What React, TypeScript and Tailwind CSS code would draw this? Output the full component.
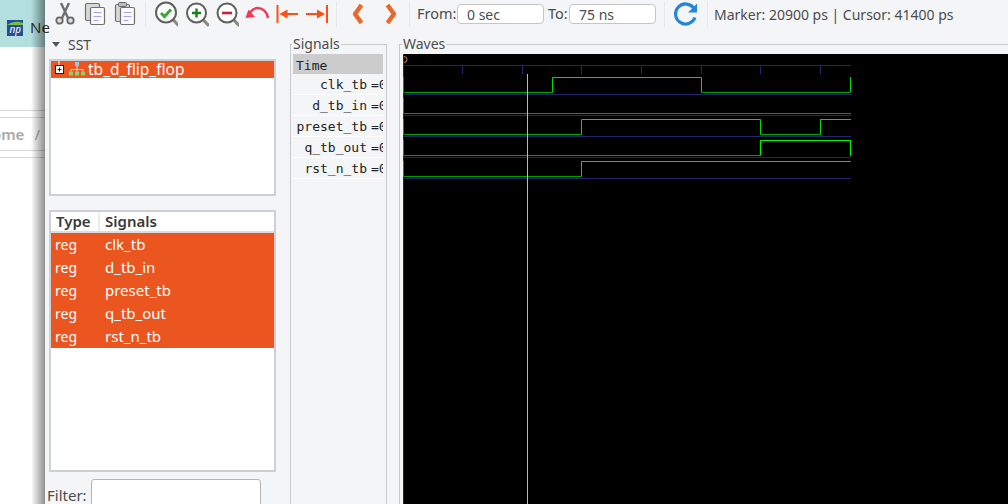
import type { ReactNode } from 'react';

const ui = 'font-["Noto_Sans",sans-serif]';
const mono = 'font-["DejaVu_Sans_Mono",monospace]';

// signal panel rows, the value column is cut off by the pane edge
const names = ['clk_tb', 'd_tb_in', 'preset_tb', 'q_tb_out', 'rst_n_tb'];

function Icon({ w, children }: { w: number; children: ReactNode }) {
  return (
    <svg width={w} height={28} viewBox={`0 0 ${w} 28`} className="block shrink-0">
      {children}
    </svg>
  );
}

function Doc({ x, y, front }: { x: number; y: number; front?: boolean }) {
  return (
    <g>
      <rect x={x} y={y} width="14" height="17" rx="1.5" fill={front ? '#fafafa' : '#d8d8d8'} stroke="#707070" strokeWidth="1.2" />
      {front && (
        <path d={`M${x + 3} ${y + 5}h8M${x + 3} ${y + 9}h8M${x + 3} ${y + 13}h5`} stroke="#a8a4ec" strokeWidth="1.2" />
      )}
    </g>
  );
}

function Lens({ cx, cy, r, children }: { cx: number; cy: number; r: number; children: ReactNode }) {
  const edge = r * 0.7;
  return (
    <g>
      <path d={`M${cx + edge} ${cy + edge}L${cx + r + 2} ${cy + r + 2.500}`} stroke="#8a8a80" strokeWidth="3" strokeLinecap="round" />
      <circle cx={cx} cy={cy} r={r} fill="#fff" stroke="#5f625c" strokeWidth="2" />
      {children}
    </g>
  );
}

function Toolbar() {
  return (
    <div className={`flex h-[28px] items-center pl-[9px] text-[14px] text-[#4c4c4c] ${ui}`}>
      <Icon w={22}>
        <path d="M7 3l7 15M15 3l-7 15" stroke="#6e6e6e" strokeWidth="2.400" />
        <circle cx="5.500" cy="20.500" r="3.200" fill="#ddd" stroke="#666" strokeWidth="1.800" />
        <circle cx="16.500" cy="20.500" r="3.200" fill="#ddd" stroke="#666" strokeWidth="1.800" />
      </Icon>
      <div className="w-[8px]" />
      <Icon w={22}>
        <Doc x={1.5} y={3.5} />
        <Doc x={6.5} y={7.5} front />
      </Icon>
      <div className="w-[8px]" />
      <Icon w={22}>
        <Doc x={1.5} y={4.5} />
        <rect x="4.500" y="2.500" width="8" height="4" rx="1" fill="#bbb" stroke="#666" />
        <Doc x={6.5} y={7.5} front />
      </Icon>
      <div className="ml-[9px] mr-[8px] h-[25px] w-px shrink-0 bg-[#e6e8ea]" />
      <Icon w={24}>
        <Lens cx={12} cy={12.5} r={10}>
          <path d="M7 13l3.500 3.500 6.500-7" fill="none" stroke="#3da23a" strokeWidth="3" />
        </Lens>
      </Icon>
      <div className="w-[7px]" />
      <Icon w={24}>
        <Lens cx={11.5} cy={13} r={9.5}>
          <path d="M11.500 8.500v9M7 13h9" stroke="#17801c" strokeWidth="2.400" />
        </Lens>
      </Icon>
      <div className="w-[6px]" />
      <Icon w={24}>
        <Lens cx={12} cy={13} r={9.5}>
          <path d="M7 13h10" stroke="#c8203a" strokeWidth="2.600" />
        </Lens>
      </Icon>
      <div className="w-[6px]" />
      <Icon w={24}>
        <path d="M23 18C22 11 17 8 12.500 8 9 8 7 10 5 12.500" fill="none" stroke="#f03a55" strokeWidth="2.400" />
        <path d="M0.500 18l9.500-1-6.500-7.500z" fill="#f03a55" />
      </Icon>
      <div className="w-[7px]" />
      <Icon w={24}>
        <path d="M1.500 5v18" stroke="#fb4f14" strokeWidth="2" />
        <path d="M6 14h16" stroke="#fb4f14" strokeWidth="2" />
        <path d="M3.500 14l8-4.500v9z" fill="#fb4f14" />
      </Icon>
      <div className="w-[4px]" />
      <Icon w={24}>
        <path d="M23 5v18" stroke="#fb4f14" strokeWidth="2" />
        <path d="M2 14h16" stroke="#fb4f14" strokeWidth="2" />
        <path d="M21 14l-8-4.500v9z" fill="#fb4f14" />
      </Icon>
      <div className="ml-[8px] mr-[12px] h-[25px] w-px shrink-0 bg-[#e6e8ea]" />
      <Icon w={16}>
        <path d="M12.500 5L6 14l6.500 9" fill="none" stroke="#e9692c" strokeWidth="4.500" strokeLinejoin="round" />
      </Icon>
      <div className="w-[17px]" />
      <Icon w={16}>
        <path d="M5.500 5L12 14l-6.500 9" fill="none" stroke="#e9692c" strokeWidth="4.500" strokeLinejoin="round" />
      </Icon>
      <div className="ml-[11px] mr-[7px] h-[25px] w-px shrink-0 bg-[#e6e8ea]" />
      <span className="w-[40px] text-[14.500px]">From:</span>
      <div className="flex h-[20px] w-[87px] items-center rounded-[4px] border border-[#c4c6c9] bg-white pl-[9px]">0 sec</div>
      <span className="ml-[4px] w-[21px] text-[14.500px]">To:</span>
      <div className="flex h-[20px] w-[87px] items-center rounded-[4px] border border-[#c4c6c9] bg-white pl-[9px]">75 ns</div>
      <div className="ml-[8px] mr-[8px] h-[25px] w-px shrink-0 bg-[#e6e8ea]" />
      <Icon w={25}>
        <path d="M21 8.500A10 10 0 1 0 22 17.500" fill="none" stroke="#2585d8" strokeWidth="3.200" />
        <path d="M24 3.500v9h-9z" fill="#2585d8" />
      </Icon>
      <div className="ml-[9px] mr-[6px] h-[25px] w-px shrink-0 bg-[#e6e8ea]" />
      <span className="whitespace-pre">Marker: 20900 ps | Cursor: 41400 ps</span>
    </div>
  );
}

function Wave({ d, bright }: { d: string; bright?: boolean }) {
  return <path d={d} fill="none" stroke={bright ? '#00e000' : '#00a000'} strokeWidth="1" />;
}

function WaveCanvas() {
  const ticks = [462, 522, 581, 641, 701, 760, 820];
  const rows = [94.5, 115.5, 136.5, 157.5, 178.5];
  return (
    <svg width={605} height={450} viewBox="403 54 605 450" className="block">
      <path d="M403.500 54v450" stroke="#22226e" />
      <path d="M403 65.500h448" stroke="#24246e" />
      {ticks.map((t) => (
        <path key={t} d={`M${t + 0.5} 65v9`} stroke="#24246e" />
      ))}
      {rows.map((y) => (
        <path key={y} d={`M403 ${y}h448`} stroke="#24246e" />
      ))}
      <Wave d="M403.500 77v15.500H552.500" />
      <Wave bright d="M552.500 92.500V77.500H701.500V92.500" />
      <Wave d="M701.500 92.500H850.500" />
      <Wave bright d="M850.500 92V77" />
      <Wave d="M403.500 98v15.500H851" />
      <Wave d="M403.500 119v15.500H581.500" />
      <Wave bright d="M581.500 134.500V119.500H760.500V134.500" />
      <Wave d="M760.500 134.500H820.500" />
      <Wave bright d="M820.500 134.500V119.500H851" />
      <Wave d="M403.500 140v15.500H760.500" />
      <path d="M760.500 155.500V140.500H850.500V156" fill="none" stroke="#00f000" strokeWidth="1.200" />
      <Wave d="M403.500 161v15.500H581.500" />
      <Wave bright d="M581.500 176.500V161.500H851" />
      <path d="M527.500 74V504" stroke="#eaa79c" />
      <path d="M404 56.500a3 3 0 0 1 0 6" fill="none" stroke="#d09040" />
    </svg>
  );
}

function OrangeRow({ type, name }: { type: string; name: string }) {
  return (
    <div className="flex h-[23px] items-center bg-[#eb5520] text-[14px] text-[#fff]">
      <span className="w-[54px] pl-[4px]">{type}</span>
      <span className="text-[15px]">{name}</span>
    </div>
  );
}

export default function App() {
  return (
    <div className={`flex h-[504px] w-[1008px] overflow-hidden bg-[#f4f5f7] ${ui}`}>
      {/* browser page behind the app window */}
      <div className="relative flex h-full w-[45px] shrink-0 flex-col bg-white">
        <div className="flex h-[47px] items-center bg-[#b4dfdf] pl-[7px] pt-[8px]">
          <svg width="16" height="16" viewBox="0 0 16 16" className="shrink-0">
            <rect width="16" height="16" fill="#1f4f96" />
            <path d="M0 5c6-4 11-4 16-2v2H0z" fill="#7fbf3f" />
            <text x="2.500" y="13" fontSize="10" fontStyle="italic" fill="#fff">np</text>
          </svg>
          <span className="ml-[7px] text-[15px] text-[#333]">Ne</span>
        </div>
        <div className="h-[64px] border-b border-[#d8d8d8]" />
        <div className="mt-[6px] flex h-[34px] items-center justify-end border-y border-[#d8d8d8] pr-[5px] text-[15px] font-semibold text-[#a8a8a8]">
          <span>ome</span>
          <span className="ml-[10px] font-normal">/</span>
        </div>
        <div className="h-[7px] border-b border-[#d8d8d8]" />
        <div className="absolute inset-y-0 right-0 w-[14px] bg-gradient-to-r from-transparent to-[#00000070]" />
      </div>

      {/* gtkwave window */}
      <div className="flex min-w-0 flex-1 flex-col">
        <Toolbar />
        <div className="mt-[16px] flex min-h-0 flex-1 pl-[4px]">
          {/* SST pane */}
          <div className="w-[227px] shrink-0 text-[14px] text-[#4c4c4c]">
            <div className="-mt-[10px] mb-[5px] flex h-[20px] items-center gap-[8px] pl-[3px]">
              <span className="h-0 w-0 border-x-[4px] border-t-[5px] border-x-transparent border-t-[#555]" />
              <span>SST</span>
            </div>
            <div className="h-[137px] border-2 border-[#ccd0d4] bg-white">
              <div className="flex h-[17px] items-center bg-[#eb5520] text-[15.500px] text-[#fff]">
                <svg width="37" height="17" viewBox="0 0 37 17" className="shrink-0">
                  <path d="M8 0v4" stroke="#fff" />
                  <rect x="4.500" y="4.500" width="8" height="8" fill="#fff" stroke="#222" />
                  <path d="M6.500 8.500h4M8.500 6.500v4" stroke="#222" />
                  <rect x="24" y="1" width="4" height="4" fill="#9cc4e4" />
                  <path d="M26 5v3.500M20 8.500h12M20 8.500v2M26 8.500v2M32 8.500v2" stroke="#ddd" />
                  <rect x="18" y="10.500" width="4" height="4" fill="#8fcf6c" />
                  <rect x="24" y="10.500" width="4" height="4" fill="#8fcf6c" />
                  <rect x="30" y="10.500" width="4" height="4" fill="#8fcf6c" />
                </svg>
                <span>tb_d_flip_flop</span>
              </div>
            </div>
            <div className="mt-[14px] h-[262px] border-2 border-[#ccd0d4] bg-white">
              <div className="flex h-[21px] items-center border-b-2 border-[#dcdcdc] text-[15px] font-semibold text-[#3a3a3a]">
                <span className="flex h-full w-[49px] items-center border-r-2 border-[#ececec] pl-[5px]">Type</span>
                <span className="pl-[5px]">Signals</span>
              </div>
              {names.map((n) => (
                <OrangeRow key={n} type="reg" name={n} />
              ))}
            </div>
            <div className="-ml-[2px] mt-[7px] flex items-start">
              <span className="mt-[5px] w-[44px] text-[15px]">Filter:</span>
              <div className="h-[40px] w-[170px] rounded-[3px] border border-[#b5b5b5] bg-white" />
            </div>
          </div>

          {/* signal names */}
          <div className="relative ml-[14px] h-full w-[97px] shrink-0 border-x border-t border-[#c6cace] pl-[2px] pr-[3px] pt-[9px]">
            <span className="absolute -top-[10px] left-[1px] bg-[#f4f5f7] px-px text-[14px] leading-[18px] text-[#4c4c4c]">Signals</span>
            <div className={`text-[13px] text-[#222] ${mono}`}>
              <div className="flex h-[20px] items-center bg-[#cccccc] pl-[3px] pt-[3px]">Time</div>
              {names.map((n) => (
                <div key={n} className="flex h-[21px] items-center justify-end overflow-hidden border-b border-white pt-[1px] whitespace-pre">
                  <span>{n}</span>
                  <span className="ml-[4px] w-[12px] shrink-0 overflow-hidden">=0</span>
                </div>
              ))}
            </div>
          </div>

          {/* waves */}
          <div className="relative ml-[12px] flex h-full flex-1 flex-col border-t border-l border-[#c6cace] pl-[3px] pt-[9px]">
            <span className="absolute -top-[10px] left-[2px] bg-[#f4f5f7] px-px text-[14px] leading-[18px] text-[#4c4c4c]">Waves</span>
            <div className="flex-1 bg-black">
              <WaveCanvas />
            </div>
          </div>
        </div>
      </div>
    </div>
  );
}
